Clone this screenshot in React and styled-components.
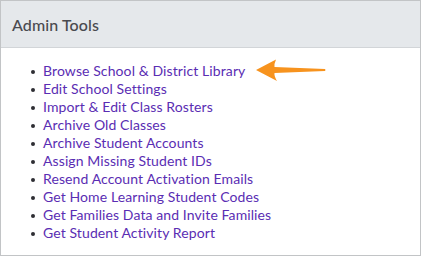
import React from "react";
import styled, { createGlobalStyle } from "styled-components";

const GlobalStyle = createGlobalStyle`
  html, body {
    margin: 0;
    padding: 0;
    background: #ffffff;
  }
  body {
    font-family: "Lato", "Noto Sans", sans-serif;
  }
`;

const Card = styled.div`
  width: 421px;
  height: 256px;
  box-sizing: border-box;
  border: 1px solid #c2c4c6;
  background: #ffffff;
`;

const Header = styled.div`
  height: 47px;
  box-sizing: border-box;
  display: flex;
  align-items: center;
  padding: 0 11px;
  background: #e5e8eb;
  border-bottom: 1px solid #d2d5d8;
  color: #4a4a4f;
  font-size: 16px;
  font-weight: 500;
  letter-spacing: 0.1px;
`;

const List = styled.ul`
  margin: 0;
  padding: 14px 0 0 42px;
  list-style: none;
`;

const Item = styled.li`
  position: relative;
  height: 18px;
  line-height: 18px;
  font-size: 14px;
  letter-spacing: 0.1px;
  color: #5a2db3;

  &::before {
    content: "";
    position: absolute;
    left: -12px;
    top: 8px;
    width: 4px;
    height: 4px;
    border-radius: 50%;
    background: #2e2e33;
  }
`;

const Link = styled.a`
  color: inherit;
  text-decoration: none;
  cursor: pointer;
`;

const Pointer = styled.svg`
  position: absolute;
  left: 212.5px;
  top: -3px;
  overflow: visible;
`;

const tools = [
  "Browse School & District Library",
  "Edit School Settings",
  "Import & Edit Class Rosters",
  "Archive Old Classes",
  "Archive Student Accounts",
  "Assign Missing Student IDs",
  "Resend Account Activation Emails",
  "Get Home Learning Student Codes",
  "Get Families Data and Invite Families",
  "Get Student Activity Report",
];

const Arrow = () => (
  <Pointer width="70" height="22" viewBox="0 0 70 22">
    <path
      d="M0 11 L20 0.5 Q18 5 18.5 8 L69 10 Q70 11 69 12 L18.5 14 Q18 17 21 22 Z"
      fill="#f7931e"
    />
  </Pointer>
);

export default function App() {
  return (
    <>
      <GlobalStyle />
      <Card>
        <Header>Admin Tools</Header>
        <List>
          {tools.map((tool, i) => (
            <Item key={tool}>
              <Link>{tool}</Link>
              {i === 0 && <Arrow />}
            </Item>
          ))}
        </List>
      </Card>
    </>
  );
}
